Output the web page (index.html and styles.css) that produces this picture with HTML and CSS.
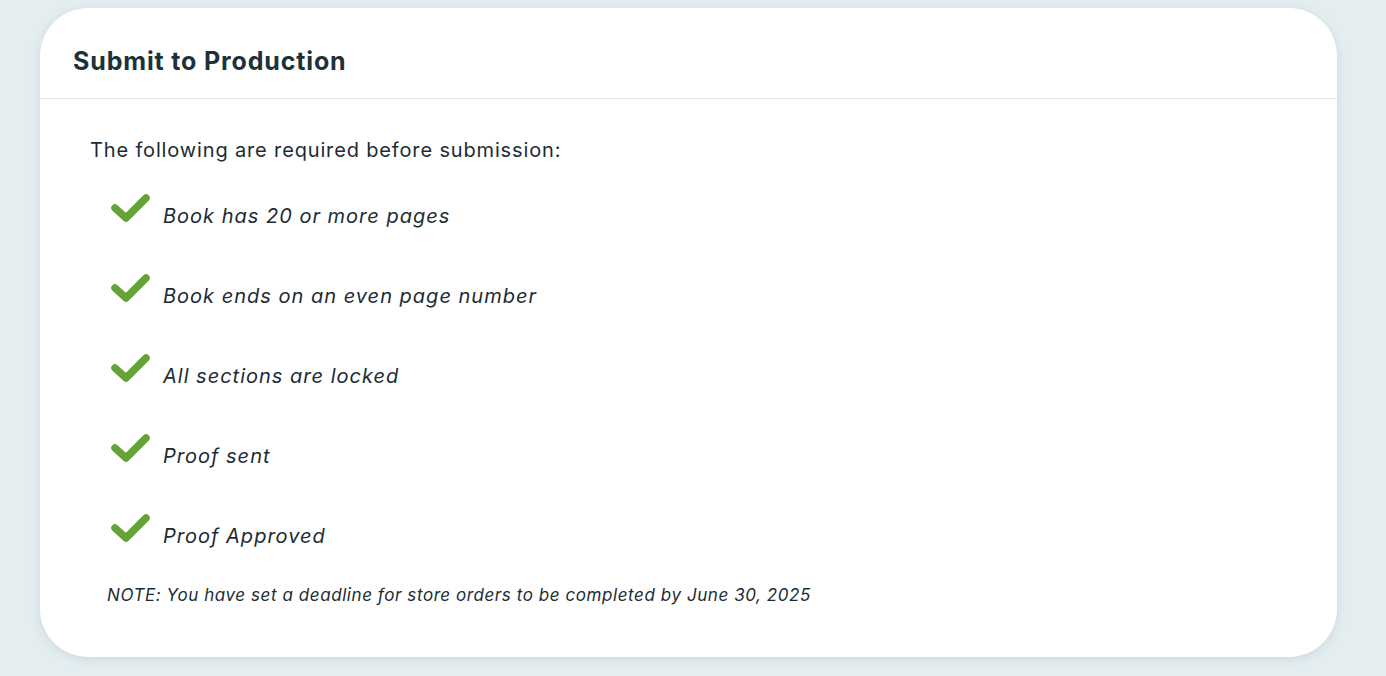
FILE: index.html
```html
<!DOCTYPE html>
<html>
<head>
<meta charset="utf-8">
<link rel="stylesheet" href="styles.css">
</head>
<body>
<div class="card">
  <div class="card-header">
    <h1 class="title">Submit to Production</h1>
  </div>
  <div class="card-body">
    <p class="intro">The following are required before submission:</p>
    <ul class="checks">
      <li class="check-item"><svg class="check" viewBox="0 0 40 32" width="40" height="32"><path d="M5 15 L16 25 L36 5" fill="none" stroke="#64a338" stroke-width="7.5" stroke-linecap="round" stroke-linejoin="round"/></svg><span class="label">Book has 20 or more pages</span></li>
      <li class="check-item"><svg class="check" viewBox="0 0 40 32" width="40" height="32"><path d="M5 15 L16 25 L36 5" fill="none" stroke="#64a338" stroke-width="7.5" stroke-linecap="round" stroke-linejoin="round"/></svg><span class="label">Book ends on an even page number</span></li>
      <li class="check-item"><svg class="check" viewBox="0 0 40 32" width="40" height="32"><path d="M5 15 L16 25 L36 5" fill="none" stroke="#64a338" stroke-width="7.5" stroke-linecap="round" stroke-linejoin="round"/></svg><span class="label">All sections are locked</span></li>
      <li class="check-item"><svg class="check" viewBox="0 0 40 32" width="40" height="32"><path d="M5 15 L16 25 L36 5" fill="none" stroke="#64a338" stroke-width="7.5" stroke-linecap="round" stroke-linejoin="round"/></svg><span class="label">Proof sent</span></li>
      <li class="check-item"><svg class="check" viewBox="0 0 40 32" width="40" height="32"><path d="M5 15 L16 25 L36 5" fill="none" stroke="#64a338" stroke-width="7.5" stroke-linecap="round" stroke-linejoin="round"/></svg><span class="label">Proof Approved</span></li>
    </ul>
    <p class="note">NOTE: You have set a deadline for store orders to be completed by June 30, 2025</p>
  </div>
</div>
</body>
</html>
```
FILE: styles.css
```css
html, body {
  margin: 0;
  padding: 0;
  background: #e4eef1;
  height: 100%;
}
body {
  padding: 8px 49px 0 40px;
  font-family: "Inter", "Open Sans", sans-serif;
  color: #1c2c34;
  box-sizing: border-box;
}
.card {
  background: #ffffff;
  border-radius: 48px;
  height: 649px;
  box-shadow: 0 2px 10px rgba(120, 150, 160, 0.25);
  overflow: hidden;
}
.card-header {
  height: 91px;
  border-bottom: 1px solid #e2e6e7;
  box-sizing: border-box;
  padding: 16px 33px 0 33px;
  display: flex;
  align-items: center;
}
.title {
  margin: 0;
  font-size: 25px;
  font-weight: 700;
  letter-spacing: 0.85px;
  color: #1e3139;
}
.card-body {
  padding: 36px 50px 0 50px;
}
.intro {
  margin: 0;
  font-size: 20px;
  line-height: 30px;
  letter-spacing: 0.85px;
}
.checks {
  list-style: none;
  margin: 28px 0 0 0;
  padding: 0 0 0 20px;
  display: flex;
  flex-direction: column;
  gap: 49px;
}
.check-item {
  display: flex;
  align-items: flex-start;
  gap: 13px;
  height: 31px;
}
.check {
  display: block;
  flex: none;
}
.label {
  font-style: italic;
  font-size: 20px;
  line-height: 30px;
  letter-spacing: 1px;
  padding-top: 8px;
}
.note {
  margin: 39px 0 0 17px;
  font-size: 17px;
  font-style: italic;
  line-height: 24px;
  letter-spacing: 0.57px;
}
```
